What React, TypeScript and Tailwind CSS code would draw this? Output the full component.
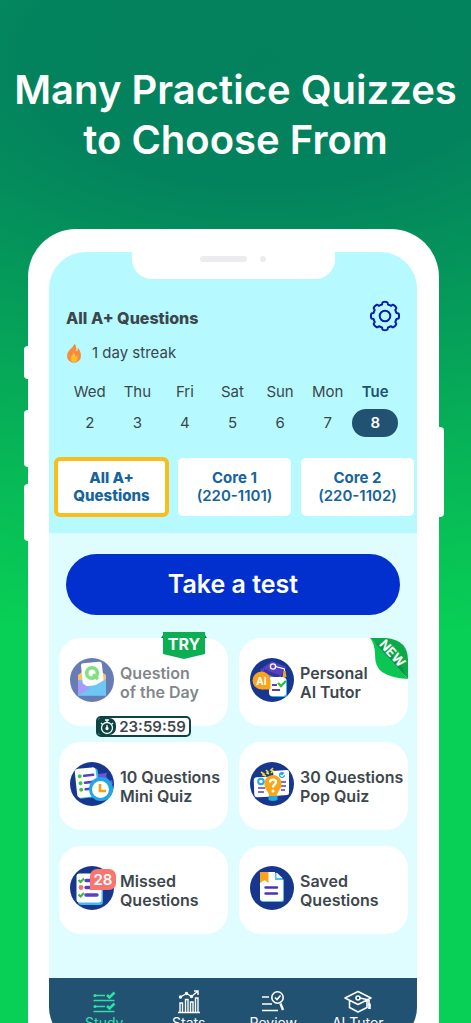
import type { ReactNode } from "react";

const days = [
  { day: "Wed", date: 2 },
  { day: "Thu", date: 3 },
  { day: "Fri", date: 4 },
  { day: "Sat", date: 5 },
  { day: "Sun", date: 6 },
  { day: "Mon", date: 7 },
  { day: "Tue", date: 8, today: true },
];

const at = (radius: number, degrees: number) => {
  const a = (degrees * Math.PI) / 180;
  return `${(16 + radius * Math.sin(a)).toFixed(2)} ${(16 - radius * Math.cos(a)).toFixed(2)}`;
};

const gearPath =
  Array.from({ length: 8 }, (_, i) => {
    const c = i * 45;
    return `${i === 0 ? "M" : "L"}${at(14, c - 8)}Q${at(14.4, c)} ${at(14, c + 8)}Q${at(13.7, c + 12)} ${at(12.8, c + 12.5)}Q${at(11.2, c + 14)} ${at(12, c + 22.5)}Q${at(11.2, c + 31)} ${at(12.8, c + 32.5)}Q${at(13.7, c + 33)} ${at(14, c + 37)}`;
  }).join("") + "Z";

function GearIcon() {
  return (
    <svg viewBox="0 0 32 32" className="size-8" fill="none" stroke="#0a1cad" strokeWidth="2" strokeLinejoin="round" aria-hidden="true">
      <path d={gearPath} />
      <circle cx="16" cy="16" r="5.3" />
    </svg>
  );
}

function FlameIcon() {
  return (
    <svg viewBox="0 0 16 20" className="h-5 w-4" aria-hidden="true">
      <path d="M8.300 0.500C8.600 4 1 7 1 13a7 6.700 0 0 0 14 0c0-3.500-1.300-6.300-3.300-8.200 0.300 1.900-0.300 3.200-1.300 3.700C10.700 5.500 10.100 2.300 8.300 0.500Z" fill="#f98a3c" />
      <path d="M7.700 9.500c0.200 1.800-3.200 3-3.200 6 0 2.200 1.600 3.500 3.500 3.500s3.600-1.300 3.600-3.500c0-1.300-0.500-2.300-1.200-3-0.100 0.900-0.600 1.300-1.100 1.400 0-1.900-0.400-3.300-1.600-4.400Z" fill="#fdc02f" />
    </svg>
  );
}

function Badge({ children }: { children: ReactNode }) {
  return (
    <svg viewBox="0 0 44 44" className="size-11 shrink-0" aria-hidden="true">
      <circle cx="22" cy="22" r="22" fill="#17378f" />
      {children}
    </svg>
  );
}

function EnvelopeArt() {
  return (
    <Badge>
      <path d="M8 22V17L20 8q2-1.600 4 0l12 9v10H8Z" fill="#f8a10c" />
      <path d="M8 22h28v15.500H8Z" fill="#20aaee" />
      <rect x="12" y="4.500" width="21" height="23" rx="2.500" fill="#fff" transform="rotate(-6 22 17)" />
      <circle cx="22" cy="15" r="5.300" fill="none" stroke="#3bd33b" strokeWidth="3.600" />
      <path d="m23 16.500 5 4.500" stroke="#3bd33b" strokeWidth="3.200" />
      <path d="M36 21 8 37.500h28Z" fill="#20aaee" />
      <path d="M8 22 20 30.500 8 37.500Z" fill="#7468f0" />
    </Badge>
  );
}

function TutorArt() {
  return (
    <Badge>
      <path d="m14 12 16 2 1 7-16 4-2-4Z" fill="#29abef" />
      <path d="M10 12 22 3l14 6-5 9-14-6-3 5Z" fill="#5740c2" />
      <path d="m14 11 16 6-1 4-15-6Z" fill="#41309d" />
      <circle cx="23" cy="8.500" r="2.600" fill="none" stroke="#fff" strokeWidth="1.400" />
      <path d="m25.500 8.500 9 2.500v7" fill="none" stroke="#fff" strokeWidth="1.200" />
      <path d="m33.500 13-1 6h4l-1-6Z" fill="#f9a41a" />
      <rect x="20" y="20" width="17" height="19" rx="3" fill="#37b7f0" />
      <rect x="19" y="19" width="17" height="19" rx="3" fill="#fff" />
      <path d="M22 27h5M22 32h8" stroke="#5740c2" strokeWidth="2" />
      <path d="m28 25 3 3 5-5" fill="none" stroke="#32bd3c" strokeWidth="2.400" />
      <circle cx="11.500" cy="22.500" r="9" fill="#f9a41a" />
      <path d="M12 22.500h8.500v9H12Z" fill="#f9a41a" />
      <text x="11.500" y="26.500" textAnchor="middle" fill="#fff" fontSize="10" fontWeight="700">AI</text>
    </Badge>
  );
}

function MiniArt() {
  return (
    <Badge>
      <path d="m28 12 9-1-1 3 3 5 3-1 1 4H29Z" fill="#6c57d2" />
      <g transform="rotate(-6 17 21)">
        <rect x="7" y="7" width="22" height="29" rx="3.500" fill="#35b9ef" />
        <rect x="6" y="6" width="21" height="29" rx="3.500" fill="#fff" />
        <path d="M15 13.500h9M15 20.500h8M15 27h7" stroke="#5740c2" strokeWidth="2.600" strokeLinecap="round" />
        <circle cx="10.500" cy="13.500" r="2" fill="#3fc643" />
        <circle cx="10.500" cy="20.500" r="2" fill="#3fc643" />
        <circle cx="10.500" cy="27" r="2" fill="#3fc643" />
      </g>
      <circle cx="31" cy="27" r="12" fill="#21a7e8" />
      <circle cx="30.500" cy="27.500" r="8.500" fill="#fff" />
      <path d="M30 22v7h6" fill="none" stroke="#f8a117" strokeWidth="2.600" />
    </Badge>
  );
}

function PopArt() {
  return (
    <Badge>
      <rect x="4" y="15" width="18" height="20" rx="3" fill="#fff" transform="rotate(-2 13 25)" />
      <path d="m23 9 14-1q2 0 2 2v21q0 2-2 2l-12 1Z" fill="#fff" />
      <circle cx="11" cy="19.500" r="2.800" fill="none" stroke="#23a9e8" strokeWidth="2" />
      <circle cx="32" cy="13" r="3" fill="#23a9e8" />
      <path d="m30.500 13 1.500 1.500 3-3" fill="none" stroke="#fff" strokeWidth="1.200" />
      <path d="M8 26h7M8 30h6M31 20h5M31 24h5M31 28h4" stroke="#5740c2" strokeWidth="1.700" />
      <path d="m11 10 3 2-1 1 3 1M16 8l2 2-1 1 2 1M23 6l-2 2 2 1-2 2" fill="none" stroke="#f7df22" strokeWidth="1.600" />
      <path d="M23 13c5 0 8.500 3.500 8.500 9 0 6-4.500 7-4.500 12h-8c0-5-4.500-6-4.500-12 0-5.500 3.500-9 8.500-9Z" fill="#f9a617" />
      <path d="M18.500 34h9v4q-4.500 2-9 0Z" fill="#20aade" />
      <path d="M20 20.500c0-4 6-3.500 6-0.500 0 2.500-3 2.500-3 5v0.500" fill="none" stroke="#fff" strokeWidth="2.300" />
      <circle cx="23" cy="29" r="1.500" fill="#fff" />
    </Badge>
  );
}

function MissedArt() {
  return (
    <Badge>
      <rect x="8" y="8" width="25" height="31" rx="3.500" fill="#45b9ee" />
      <rect x="6.500" y="7.500" width="25" height="29" rx="3" fill="#fff" />
      <path d="M16 14.500h11M16 21.500h11M16 29h11" stroke="#5740c2" strokeWidth="3.400" strokeLinecap="round" />
      <path d="m8.500 14 2 2 3.500-3.500M8.500 28.500l2 2 3.500-3.500" fill="none" stroke="#32b83d" strokeWidth="2" />
      <circle cx="11" cy="21.500" r="2.400" fill="#f97066" />
    </Badge>
  );
}

function SavedArt() {
  return (
    <Badge>
      <path d="M11 7h16l7 7v20q0 2-2 2H13q-2 0-2-2Z" fill="#57bdec" />
      <path d="M10 6h15v8h8v19q0 2-2 2H12q-2 0-2-2Z" fill="#fff" />
      <path d="m26.500 6.500 6 5.500h-5q-1 0-1-1Z" fill="#fff" />
      <path d="M10 6h8.500v11l-4-3-4.500 3Z" fill="#faa31a" />
      <path d="M15.500 21.500H27M15.500 27.500H27" stroke="#4b36b2" strokeWidth="2.400" strokeLinecap="round" />
    </Badge>
  );
}

function StudyIcon() {
  return (
    <svg viewBox="0 0 24 24" className="size-6" fill="none" stroke="currentColor" strokeWidth="1.700" aria-hidden="true">
      <path d="M3 5.500h10M3 16.500h10M1.500 10.500h21M1.500 21.500h21" />
      <path d="m15 5 2.500 2.500 5-5M15 16l2.500 2.500 5-5" strokeWidth="2.600" />
      <circle cx="3" cy="5.500" r="1.600" fill="currentColor" stroke="none" />
      <circle cx="3" cy="16.500" r="1.600" fill="currentColor" stroke="none" />
    </svg>
  );
}

function StatsIcon() {
  return (
    <svg viewBox="0 0 24 24" className="size-6" fill="none" stroke="currentColor" strokeWidth="1.400" aria-hidden="true">
      <path d="M1 22.500h22M3 22.500V13h2.500v9.500M8.500 22.500V9.500H11v13M13.500 22.500V12H16v10.500M18.500 22.500V8H21v14.500M3.500 7l6-3.500 5 3 6-5M17 1h4v4" />
      <circle cx="3.500" cy="7" r="1" fill="currentColor" />
      <circle cx="9.500" cy="3.500" r="1" fill="currentColor" />
      <circle cx="14.500" cy="6.500" r="1" fill="currentColor" />
    </svg>
  );
}

function ReviewIcon() {
  return (
    <svg viewBox="0 0 24 24" className="size-6" fill="none" stroke="currentColor" strokeWidth="1.600" aria-hidden="true">
      <path d="M1 7h7M1 14h10M1 20.500h16" />
      <circle cx="16.500" cy="7.500" r="5.700" />
      <path d="m14 7.500 2 2 3.500-4" />
      <path d="m19.500 13.500 2.500 6.500" strokeWidth="2.400" />
    </svg>
  );
}

function CapIcon() {
  return (
    <svg viewBox="0 0 30 24" className="h-6 w-[30px]" fill="none" stroke="currentColor" strokeWidth="1.600" strokeLinejoin="round" aria-hidden="true">
      <path d="M2 8 15 1.500 28 8l-13 6.500ZM6.500 10.500v7L15 22l9-4.500v-7M17 8l9 2v5" />
      <circle cx="15" cy="8" r="2" />
      <path d="M26.500 13.500v5.500" strokeWidth="2.600" />
    </svg>
  );
}

function Timer() {
  return (
    <div className="absolute top-[78px] left-[37px] z-10 flex h-[21px] w-[95px] items-center overflow-hidden rounded-[5px] border-2 border-[#0c4444] bg-white">
      <span className="flex h-full w-[18px] shrink-0 items-center justify-center rounded-r-[7px] bg-[#0c4444]">
        <svg viewBox="0 0 18 18" className="size-[18px]" fill="none" stroke="#fff" strokeWidth="1.300" aria-hidden="true">
          <circle cx="9" cy="10" r="5.500" />
          <path d="M7 2h4M9 2v3M9 7v4M3 5l1.500 1.500M15 5l-1.500 1.500" />
          <circle cx="9" cy="10.500" r="1" fill="#fff" />
        </svg>
      </span>
      <span className="flex-1 text-center text-[15px] leading-none font-semibold text-[#3d474d]">23:59:59</span>
    </div>
  );
}

function TryRibbon() {
  return (
    <div className="absolute -top-[6px] left-[101px] h-[27px] w-12">
      <svg viewBox="0 0 48 27" className="absolute inset-0 size-full" aria-hidden="true">
        <path d="m5 0h38l4 6H1Z" fill="#05803f" />
        <path d="M3 0h42v22l-21 5-21-5Z" fill="#0bae50" />
      </svg>
      <span className="relative block text-center text-[16px] leading-6 font-bold text-white">TRY</span>
    </div>
  );
}

function NewRibbon() {
  return (
    <div className="absolute top-0 right-0 h-[41px] w-[38px]">
      <svg viewBox="0 0 38 41" className="absolute inset-0 size-full" aria-hidden="true">
        <path d="M0 0h16q22 2 22 22v19Z" fill="#0baa4b" />
        <path d="M0 0 38 41Q21 40 12 34 5 29 5 17 5 6 0 0Z" fill="#0cc653" />
        <path d="m4 5 31 33-2-8L14 8Z" fill="#087f3e" opacity=".4" />
      </svg>
      <span className="absolute top-[7px] left-[7px] rotate-[48deg] text-[13px] leading-4 font-bold text-white">NEW</span>
    </div>
  );
}

type CardProps = { art: ReactNode; lines: [string, string]; faded?: boolean; children?: ReactNode };

function QuizCard({ art, lines, faded, children }: CardProps) {
  return (
    <div className="relative">
      <button type="button" className="flex h-[88px] w-full items-start rounded-[22px] bg-white pt-5 pl-[11px] text-left">
        <span className={faded ? "flex items-center gap-[6px] opacity-65" : "flex items-center gap-[6px]"}>
          {art}
          <span className="pt-[5px] text-[16px] leading-[19px] font-semibold whitespace-nowrap text-[#3d474d]">
            {lines[0]}
            <br />
            {lines[1]}
          </span>
        </span>
      </button>
      {children}
    </div>
  );
}

const navItems = [
  { label: "Study", icon: <StudyIcon />, active: true },
  { label: "Stats", icon: <StatsIcon /> },
  { label: "Review", icon: <ReviewIcon /> },
  { label: "AI Tutor", icon: <CapIcon /> },
];

export default function App() {
  return (
    <main className="h-screen overflow-hidden bg-[radial-gradient(1100px_580px_at_56%_60px,#03815d_0%,#03835d_22%,#07b457_70%,#08cf55_100%)] font-['Inter','Liberation_Sans',sans-serif]">
      <h1 className="pt-[65px] text-center text-[40px] leading-[50px] font-semibold whitespace-nowrap text-white">
        Many Practice Quizzes
        <br />
        to Choose From
      </h1>

      <div className="relative mt-16 mr-8 ml-7 rounded-[48px] bg-white pt-[23px] pr-[22px] pb-6 pl-[21px]">
        <span className="absolute top-[117px] -left-1 h-[33px] w-2 rounded-l-[4px] bg-white" />
        <span className="absolute top-[181px] -left-1 h-[57px] w-2 rounded-l-[4px] bg-white" />
        <span className="absolute top-[255px] -left-1 h-[57px] w-2 rounded-l-[4px] bg-white" />
        <span className="absolute top-[198px] -right-[5px] h-[90px] w-3 rounded-r-[4px] bg-white" />

        <div className="overflow-hidden rounded-[37px] bg-[#dffdff]">
          <header className="bg-[#b6faff] pb-[17px]">
            <div className="mx-auto flex h-[27px] w-[203px] items-start justify-center gap-[13px] rounded-b-[20px] bg-white pt-1">
              <span className="h-[6px] w-[47px] rounded-full bg-[#ececee]" />
              <span className="size-[6px] rounded-full bg-[#ececee]" />
            </div>
            <div className="mt-[21px] flex items-center justify-between pr-4 pl-[17px]">
              <h2 className="pt-1 text-[16px] leading-7 font-extrabold text-[#3b464b]">All A+ Questions</h2>
              <button type="button" aria-label="Settings">
                <GearIcon />
              </button>
            </div>
            <p className="mt-[11px] flex items-center gap-[10px] pl-[17px] text-[15px] leading-5 text-[#3b464b]">
              <FlameIcon />
              1 day streak
            </p>
            <ol className="mt-[18px] grid grid-cols-7 pr-[18px] pl-[17px] text-center text-[15px] text-[#3b464b]">
              {days.map(({ day, date, today }) => (
                <li key={day} className="flex flex-col items-center gap-[6px]">
                  <span className={today ? "leading-[22px] font-semibold text-[#225272]" : "leading-[22px]"}>{day}</span>
                  <span className={today ? "w-[46px] rounded-full bg-[#225272] leading-7 font-semibold text-white" : "leading-7"}>{date}</span>
                </li>
              ))}
            </ol>
            <div className="mt-[21px] grid grid-cols-3 gap-[10px] pr-[3px] pl-[6px] text-[15px] leading-[18px] text-[#15649a]">
              <button type="button" className="h-[58px] rounded-[5px] border-[3px] border-[#f8be1c] bg-white font-extrabold ring-1 ring-[#f8be1c]">
                All A+
                <br />
                Questions
              </button>
              <button type="button" className="h-[58px] rounded-[5px] bg-white font-semibold">
                <b className="font-bold">Core 1</b>
                <br />
                (220-1101)
              </button>
              <button type="button" className="h-[58px] rounded-[5px] bg-white font-semibold">
                <b className="font-bold">Core 2</b>
                <br />
                (220-1102)
              </button>
            </div>
          </header>

          <section className="pt-[21px] pb-[44px]">
            <div className="px-[17px]">
              <button type="button" className="h-[61px] w-full rounded-full bg-[#0130ce] text-[25px] font-semibold text-white">
                Take a test
              </button>
            </div>
            <div className="mt-[23px] grid grid-cols-2 gap-x-[11px] gap-y-4 pr-[9px] pl-[10px]">
              <QuizCard art={<EnvelopeArt />} lines={["Question", "of the Day"]} faded>
                <TryRibbon />
                <Timer />
              </QuizCard>
              <QuizCard art={<TutorArt />} lines={["Personal", "AI Tutor"]}>
                <NewRibbon />
              </QuizCard>
              <QuizCard art={<MiniArt />} lines={["10 Questions", "Mini Quiz"]} />
              <QuizCard art={<PopArt />} lines={["30 Questions", "Pop Quiz"]} />
              <QuizCard art={<MissedArt />} lines={["Missed", "Questions"]}>
                <span className="absolute top-[23px] left-[31px] h-[21px] w-[26px] rounded-[7px] rounded-bl-none bg-[#f9756f] text-center text-[15px] leading-[21px] font-semibold text-white">
                  28
                </span>
              </QuizCard>
              <QuizCard art={<SavedArt />} lines={["Saved", "Questions"]} />
            </div>
          </section>

          <nav className="grid h-[66px] grid-cols-4 bg-[#225272] pt-3 pr-[17px] pl-[13px] text-[14px] leading-[18px] text-white">
            {navItems.map(({ label, icon, active }) => (
              <a key={label} href="#" className={active ? "flex flex-col items-center text-[#2fe0a5]" : "flex flex-col items-center"}>
                {icon}
                {label}
              </a>
            ))}
          </nav>
        </div>
      </div>
    </main>
  );
}
